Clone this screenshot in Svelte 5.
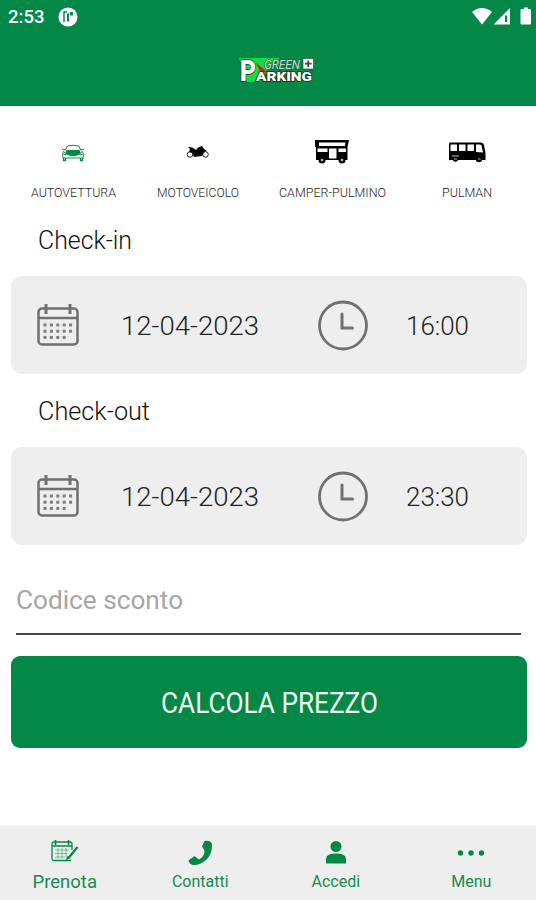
<script lang="ts">
    const vehicles = [
        { id: 'car', label: 'AUTOVETTURA', width: 85 },
        { id: 'moto', label: 'MOTOVEICOLO', width: 82 },
        { id: 'camper', label: 'CAMPER-PULMINO', width: 107 },
        { id: 'bus', label: 'PULMAN', width: 50 },
    ];

    const stays = [
        { title: 'Check-in', date: '12-04-2023', time: '16:00', width: 94 },
        { title: 'Check-out', date: '12-04-2023', time: '23:30', width: 112 },
    ];

    const tabs = [
        { id: 'book', label: 'Prenota' },
        { id: 'phone', label: 'Contatti' },
        { id: 'user', label: 'Accedi' },
        { id: 'more', label: 'Menu' },
    ];

    // three rows of day dots, the last one is a dot short
    const days = [...new Array(14)].map((v, i) => ({
        x: 8 + (i % 5) * 6.4,
        y: 19.5 + Math.floor(i / 5) * 6.2,
    }));

    let active = $state('book');
</script>

<div class="app">
    <header>
        <div class="status">
            <span class="clock">2:53</span>
            <svg class="badge" width="20" height="20" viewBox="0 0 20 20">
                <circle cx="10" cy="10" r="9.500" fill="#fff"/>
                <path d="M6 4.500v10.500M6 5h3" fill="none" stroke="#048848" stroke-width="1.500"/>
                <path d="M9 6.500h2v8H9zM12 5h3v3.500h-3z" fill="#048848"/>
            </svg>
            <svg class="signals" width="62" height="20" viewBox="0 0 62 20" fill="#fff">
                <path d="M0 5Q10 -3 20 5L10 17.500Z"/>
                <path fill-rule="evenodd" d="M38 1V17.500H21.500ZM33 8.500V15h2V8.500Z"/>
                <path d="M50 2h2V.5h4V2h2q1 0 1 1v13.500q0 1-1 1h-8.500q-1 0-1-1V3q0-1 1-1z"/>
            </svg>
        </div>
        <svg class="logo" width="82" height="30" viewBox="0 0 82 30">
            <path d="M1 3h41L32 10 22 27H9Z" fill="#12dc42"/>
            <path d="M18 8l14 11-10-3z" fill="#d71920"/>
            <text class="bold" x="2" y="26" font-size="30" textLength="16" lengthAdjust="spacingAndGlyphs">P</text>
            <text class="bold" x="18" y="26" font-size="12" textLength="56" lengthAdjust="spacingAndGlyphs">ARKING</text>
            <text class="green" x="26" y="13.500" font-size="12.500" textLength="36" lengthAdjust="spacingAndGlyphs">GREEN</text>
            <rect x="65" y="3.500" width="10.500" height="10.500" fill="#f4f4f4" stroke="#234f35" stroke-width=".6"/>
            <path d="M70.200 5.500v6.500M67 8.700h6.500" stroke="#444" stroke-width="1.700"/>
            <circle cx="79" cy="4.500" r="1" fill="none" stroke="#2b6e43" stroke-width=".8"/>
        </svg>
    </header>

    <main>
        <div class="vehicles">
            {#each vehicles as vehicle}
                <button class="vehicle">
                    {#if vehicle.id === 'car'}
                        <svg width="24" height="28" viewBox="0 0 24 28" fill="none" stroke="#048848">
                            <path d="M4 12.500L6.500 8q5.500-1.500 11 0l2.500 4.500" stroke-width="1"/>
                            <path d="M5.500 12.500h13v3.500q-6.500 3.500-13 0z" fill="#048848"/>
                            <path d="M1 11.500h3M20 11.500h3M2.500 13q-2 4-.5 7h20q1.500-3-.5-7M3 14l2 1v2l-3-1M21 14l-2 1v2l3-1" stroke-width=".9"/>
                            <path d="M2.500 20v2.500h2V20M19.500 20v2.500h2V20" stroke-width="1.300"/>
                        </svg>
                    {:else if vehicle.id === 'moto'}
                        <svg width="24" height="28" viewBox="0 0 24 28">
                            <path d="M2 9l4.500.5L10 12l2-2.500 4-1.500 2 3 3 2-3 1-2 4-8 1-2-4-3-1 1-3z"/>
                            <g fill="none" stroke="#222" stroke-width="1">
                                <circle cx="4" cy="16.500" r="2.800"/>
                                <circle cx="19.500" cy="16.500" r="2.800"/>
                            </g>
                        </svg>
                    {:else if vehicle.id === 'camper'}
                        <svg width="36" height="28" viewBox="0 0 36 28">
                            <path fill-rule="evenodd" d="M1 2h34l-1.500 7v13H2V9H1zM5 4.500v3.500h26l.5-3.500zM3.500 10.500v3.500h10v-3.500zM15 10.500v10h7.500v-10zM24.500 10.500V14H32v-3.500z"/>
                            <circle cx="8" cy="22" r="3.500"/>
                            <circle cx="28" cy="22" r="3.500"/>
                            <circle cx="8" cy="22" r="1.300" fill="#bbb"/>
                            <circle cx="28" cy="22" r="1.300" fill="#bbb"/>
                        </svg>
                    {:else}
                        <svg width="38" height="28" viewBox="0 0 38 28">
                            <path fill-rule="evenodd" d="M2 4.500h31q2.500 0 3 2.500l1.500 8v7H1V6.500q0-2 1-2zM2.500 6.500v6.500h6.500V6.500zM11 6.500v6.500h6.500V6.500zM19.500 6.500v6.500H26V6.500zM28 6.500V14l7 .5L33.500 7.500Q33 6.500 31 6.500z"/>
                            <circle cx="7.500" cy="21" r="2.700"/>
                            <circle cx="31" cy="21" r="3.200"/>
                            <path d="M4 18h7M6 21h3M30 21h2.500" stroke="#bbb" stroke-width="1.200"/>
                        </svg>
                    {/if}
                    <svg class="label" width={vehicle.width} height="20">
                        <text x="0" y="15" textLength={vehicle.width} lengthAdjust="spacingAndGlyphs">{vehicle.label}</text>
                    </svg>
                </button>
            {/each}
        </div>

        {#each stays as stay}
            <section>
                <h2>
                    <svg width={stay.width} height="40">
                        <text x="0" y="27" textLength={stay.width} lengthAdjust="spacingAndGlyphs">{stay.title}</text>
                    </svg>
                </h2>
                <div class="card">
                    <svg class="calendar" width="42" height="42" viewBox="0 0 42 42">
                        <rect x="1.500" y="4.500" width="39" height="36" rx="3.500" fill="none" stroke="#707070" stroke-width="2.500"/>
                        <path d="M2 14h38" stroke="#707070" stroke-width="2.500"/>
                        <path d="M9 0v10M33 0v10" stroke="#707070" stroke-width="3"/>
                        {#each days as day}
                            <rect x={day.x - 1.5} y={day.y} width="3" height="3" fill="#7c7c7c"/>
                        {/each}
                    </svg>
                    <svg class="date" width="138" height="32">
                        <text x="0" y="26" textLength="138" lengthAdjust="spacingAndGlyphs">{stay.date}</text>
                    </svg>
                    <svg class="dial" width="50" height="50" viewBox="0 0 50 50" fill="none" stroke="#707070">
                        <circle cx="25" cy="25.500" r="23.500" stroke-width="2.800"/>
                        <path d="M24 14V28H34.500" stroke-width="3" stroke-linecap="round"/>
                    </svg>
                    <svg class="time" width="63" height="32">
                        <text x="0" y="26" textLength="63" lengthAdjust="spacingAndGlyphs">{stay.time}</text>
                    </svg>
                </div>
            </section>
        {/each}

        <input type="text" placeholder="Codice sconto"/>

        <button class="submit">
            <svg width="217" height="40">
                <text x="0" y="31" textLength="217" lengthAdjust="spacingAndGlyphs">CALCOLA PREZZO</text>
            </svg>
        </button>
    </main>

    <nav>
        {#each tabs as tab}
            <button class="tab" class:active={tab.id === active} onclick={() => active = tab.id}>
                <svg width="28" height="28" viewBox="0 0 28 28" fill="#048848">
                    {#if tab.id === 'book'}
                        <g fill="none" stroke="#048848">
                            <path d="M20 21.500H3Q1 21.500 1 19.500V5q0-2 2-2h16q2 0 2 2v6M1 7h20" stroke-width="1.300"/>
                            <path d="M4.500 1v5M17.500 1v5" stroke-width="1.600"/>
                            <path d="M4 11h14M4 14.500h12M4 18h10M7 9v11M11 9v11M15 9v9" stroke-width=".8" opacity=".6"/>
                            <path d="M26.500 8l-9 11" stroke-width="2.400"/>
                        </g>
                        <path d="M16 17l3 2-4 2.500z"/>
                    {:else if tab.id === 'phone'}
                        <path d="M18.500 2q6-1 7.500 3 .5 10-6 16-6 5.500-13 5Q3 25 2.500 21.500L8.500 17l4.500 3.500q6-3.500 5.500-9L16 7.500z"/>
                    {:else if tab.id === 'user'}
                        <circle cx="14" cy="7.500" r="5.500"/>
                        <path d="M4 24.500V20q0-5.500 10-5.500T24 20v4.500z"/>
                    {:else}
                        <circle cx="3.500" cy="14" r="2.700"/>
                        <circle cx="14" cy="14" r="2.700"/>
                        <circle cx="24.500" cy="14" r="2.700"/>
                    {/if}
                </svg>
                <span>{tab.label}</span>
            </button>
        {/each}
    </nav>
</div>

<style>
    :global(body) {
        margin: 0;
        background: #fff;
    }

    .app {
        display: flex;
        flex-direction: column;
        width: 536px;
        height: 900px;
        overflow: hidden;
        font-family: Roboto, "Liberation Sans", sans-serif;
        color: #222;
    }

    svg {
        display: block;
        flex: none;
        overflow: visible;
    }

    button {
        padding: 0;
        border: 0;
        background: none;
        font-family: inherit;
    }

    header {
        flex: none;
        box-sizing: border-box;
        height: 106px;
        border-bottom: 1px solid #087d3a;
        background: #048848;
    }

    .status {
        display: flex;
        align-items: center;
        height: 34px;
        padding: 0 6px 0 8px;
    }

    .clock {
        width: 50px;
        color: #fff;
        font-size: 18.5px;
        font-weight: 500;
    }

    .signals {
        margin-left: auto;
        margin-right: -4px;
    }

    .logo {
        margin: 21px auto 0 238px;
    }

    .bold {
        fill: #fff;
        stroke: #17331f;
        stroke-width: 1.5px;
        paint-order: stroke;
        font-weight: 900;
    }

    .green {
        fill: #c9d8cd;
        stroke: #2b5b3d;
        stroke-width: 1px;
        paint-order: stroke;
        font-style: italic;
        font-variant: small-caps;
    }

    main {
        flex: 1;
        padding: 0 9px 0 11px;
    }

    .vehicles {
        display: grid;
        grid-template-columns: 146px 104px 164px 106px;
        height: 78px;
        margin-left: -11px;
        padding-top: 32px;
    }

    .vehicle {
        display: flex;
        flex-direction: column;
        align-items: center;
    }

    .label {
        margin-top: 16px;
        fill: #222;
        font-size: 13.5px;
        font-weight: 300;
    }

    h2 {
        height: 54px;
        margin: 0 0 0 27px;
        padding-top: 6px;
        font-size: 26px;
        font-weight: 300;
        fill: #111;
    }

    section + section h2 {
        padding-top: 19px;
    }

    .card {
        display: flex;
        align-items: center;
        height: 98px;
        border-radius: 11px;
        background: #eee;
        fill: #222;
        font-size: 25.5px;
        font-weight: 300;
    }

    .calendar {
        margin-left: 26px;
    }

    .date {
        margin-left: 42px;
    }

    .dial {
        margin-left: 59px;
    }

    .time {
        margin-left: 38px;
    }

    input {
        display: block;
        box-sizing: border-box;
        width: 505px;
        height: 90px;
        margin: 0 0 21px 5px;
        padding: 22px 0 0;
        border: 0;
        border-bottom: 2px solid #484848;
        background: none;
        font-family: inherit;
        font-size: 26.2px;
        outline: none;
    }

    input::placeholder {
        color: #a6a6a6;
        opacity: 1;
    }

    .submit {
        display: flex;
        align-items: center;
        justify-content: center;
        width: 516px;
        height: 92px;
        border-radius: 9px;
        background: #048848;
        fill: #f0faf3;
        font-size: 29px;
        font-weight: 400;
    }

    nav {
        flex: none;
        display: grid;
        grid-template-columns: repeat(4, 1fr);
        height: 74px;
        padding: 0;
        margin: 0 -3px;
        box-shadow: 0 -1px 1px #f7f7f7;
        background: #eee;
    }

    .tab {
        display: flex;
        flex-direction: column;
        align-items: center;
        padding-top: 13px;
        color: #168a50;
        font-size: 16px;
    }

    .tab span {
        margin-top: 5px;
        line-height: 20px;
    }

    .active {
        font-size: 18.5px;
    }
</style>
